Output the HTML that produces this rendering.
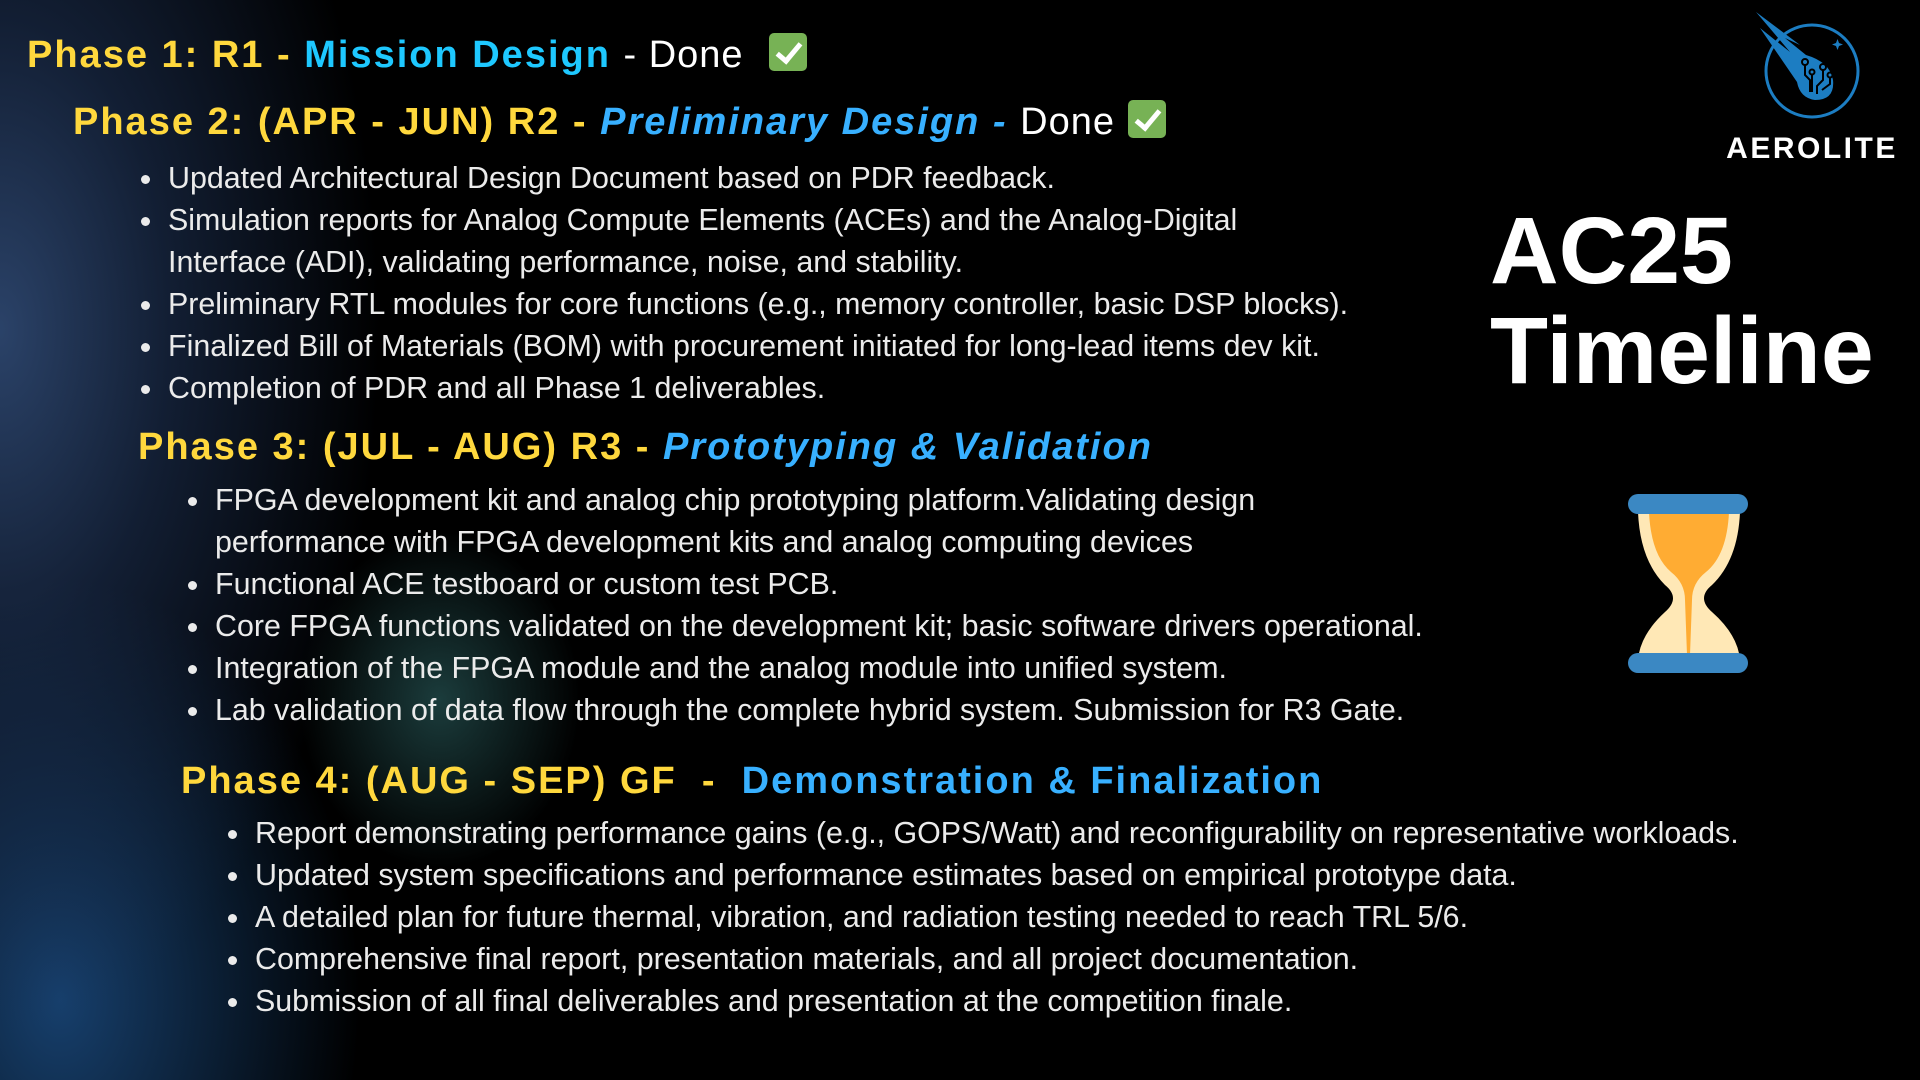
<!DOCTYPE html>
<html><head><meta charset="utf-8"><style>
html,body{margin:0;padding:0}
body{width:1920px;height:1080px;position:relative;overflow:hidden;background:#000;
font-family:"Liberation Sans",Arial,sans-serif;}
.bg{position:absolute;inset:0;background:
radial-gradient(ellipse 200px 240px at 440px 700px, rgba(45,100,100,0.6), rgba(0,0,0,0) 70%),
radial-gradient(ellipse 380px 700px at 0px 330px, rgba(45,70,110,0.95), rgba(30,50,85,0.6) 45%, rgba(0,0,0,0) 100%),
radial-gradient(ellipse 300px 420px at 60px 1000px, rgba(25,70,120,0.9), rgba(0,0,0,0) 100%);}
.h{position:absolute;font-weight:bold;font-size:38px;line-height:50px;color:#ffd83d;white-space:nowrap;letter-spacing:2px}
.b1{color:#1ec8ff}.b2{color:#38b0ff;font-style:italic}
.w{color:#fff;font-weight:normal;letter-spacing:1px}
.ul{position:absolute;margin:0;padding:0;list-style:none;color:#ebebeb;font-size:30.4px;line-height:42px;white-space:nowrap}
.ul li{position:relative}
.ul li:before{content:"";position:absolute;left:-27px;top:18px;width:9px;height:9px;border-radius:50%;background:#ebebeb}
.ul li.nb:before{display:none}
.ck{display:inline-block;width:38px;height:38px;background:#77b255;border-radius:5px;vertical-align:-4px;position:relative}
.ck:after{content:"";position:absolute;left:13px;top:5px;width:9px;height:20px;border:solid #fff;border-width:0 5px 5px 0;transform:rotate(40deg)}
.big{position:absolute;left:1490px;color:#fff;font-weight:bold;font-size:95px;line-height:100px}
</style></head><body>
<div class="bg"></div>

<div class="h" style="left:27px;top:30px">Phase 1: R1 - <span class="b1">Mission Design</span> <span class="w">- Done</span> &nbsp;<span class="ck"></span></div>
<div class="h" style="left:73px;top:97px">Phase 2: (APR - JUN) R2 - <span class="b2">Preliminary Design -</span> <span class="w">Done</span> <span class="ck"></span></div>
<ul class="ul" style="left:168px;top:157px">
<li>Updated Architectural Design Document based on PDR feedback.</li>
<li>Simulation reports for Analog Compute Elements (ACEs) and the Analog-Digital</li>
<li class="nb">Interface (ADI), validating performance, noise, and stability.</li>
<li>Preliminary RTL modules for core functions (e.g., memory controller, basic DSP blocks).</li>
<li>Finalized Bill of Materials (BOM) with procurement initiated for long-lead items dev kit.</li>
<li>Completion of PDR and all Phase 1 deliverables.</li>
</ul>
<div class="h" style="left:138px;top:422px">Phase 3: (JUL - AUG) R3 - <span class="b2">Prototyping &amp; Validation</span></div>
<ul class="ul" style="left:215px;top:479px">
<li>FPGA development kit and analog chip prototyping platform.Validating design</li>
<li class="nb">performance with FPGA development kits and analog computing devices</li>
<li>Functional ACE testboard or custom test PCB.</li>
<li>Core FPGA functions validated on the development kit; basic software drivers operational.</li>
<li>Integration of the FPGA module and the analog module into unified system.</li>
<li>Lab validation of data flow through the complete hybrid system. Submission for R3 Gate.</li>
</ul>
<div class="h" style="left:181px;top:756px">Phase 4: (AUG - SEP) GF &nbsp;- &nbsp;<span style="color:#38b0ff">Demonstration &amp; Finalization</span></div>
<ul class="ul" style="left:255px;top:812px">
<li>Report demonstrating performance gains (e.g., GOPS/Watt) and reconfigurability on representative workloads.</li>
<li>Updated system specifications and performance estimates based on empirical prototype data.</li>
<li>A detailed plan for future thermal, vibration, and radiation testing needed to reach TRL 5/6.</li>
<li>Comprehensive final report, presentation materials, and all project documentation.</li>
<li>Submission of all final deliverables and presentation at the competition finale.</li>
</ul>

<div class="big" style="top:201px">AC25</div>
<div class="big" style="top:301px">Timeline</div>

<svg style="position:absolute;left:1700px;top:0" width="220" height="170" viewBox="1700 0 220 170">
<circle cx="1812" cy="71" r="46" fill="none" stroke="#1c7dc2" stroke-width="3"/>
<path d="M1756 12 L1800 45 L1785 38 L1806 55 Q1830 62 1833 80 Q1835 100 1815 100 Q1800 98 1797 82 L1760 28 L1790 52 Z" fill="#1c7dc2"/>
<g stroke="#000" stroke-width="2" fill="none">
<circle cx="1805" cy="62" r="3"/><circle cx="1823" cy="67" r="3"/><circle cx="1812" cy="72" r="2.5"/><circle cx="1830" cy="75" r="2.5"/>
<path d="M1805 65 V75 L1810 80 V92 M1812 75 V92 M1823 70 V80 L1817 86 V94 M1830 78 V84 L1822 90"/>
</g>
<path d="M1836 43 l1.5 -4 l1.5 4 l4 1.5 l-4 1.5 l-1.5 4 l-1.5 -4 l-4 -1.5z" fill="#1c7dc2"/>
<text x="1812" y="158" text-anchor="middle" fill="#fff" font-family="Liberation Sans,sans-serif" font-weight="bold" font-size="30" letter-spacing="2.5">AEROLITE</text>
</svg>

<svg style="position:absolute;left:1625px;top:490px" width="130" height="190" viewBox="1625 490 130 190">
<path d="M1638 512 H1740 Q1738 560 1712 585 Q1696 598 1712 612 Q1738 635 1740 660 H1638 Q1640 635 1665 612 Q1681 598 1665 585 Q1640 560 1638 512Z" fill="#ffe8b6"/>
<path d="M1649 512 H1729 Q1727 555 1706 572 Q1692 583 1692 600 L1690 655 Q1688 660 1687 655 L1685 600 Q1685 583 1671 572 Q1651 555 1649 512Z" fill="#ffac33"/>
<rect x="1628" y="494" width="120" height="20" rx="10" fill="#3b88c3"/>
<rect x="1628" y="653" width="120" height="20" rx="10" fill="#3b88c3"/>
</svg>
</body></html>
